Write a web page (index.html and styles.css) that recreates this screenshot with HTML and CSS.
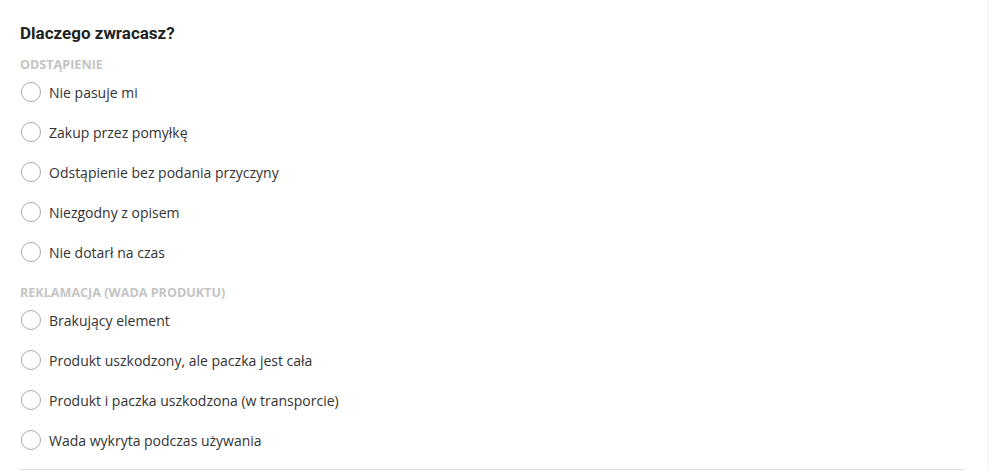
FILE: index.html
```html
<!DOCTYPE html>
<html lang="pl">
<head>
<meta charset="utf-8">
<title>Dlaczego zwracasz?</title>
<link rel="stylesheet" href="styles.css">
</head>
<body>
<div class="page">
  <h2 class="title">Dlaczego zwracasz?</h2>
  <div class="group group-first">
    <div class="label">ODSTĄPIENIE</div>
    <label class="option"><span class="radio"></span><span class="text">Nie pasuje mi</span></label>
    <label class="option"><span class="radio"></span><span class="text">Zakup przez pomyłkę</span></label>
    <label class="option"><span class="radio"></span><span class="text">Odstąpienie bez podania przyczyny</span></label>
    <label class="option"><span class="radio"></span><span class="text">Niezgodny z opisem</span></label>
    <label class="option"><span class="radio"></span><span class="text">Nie dotarł na czas</span></label>
  </div>
  <div class="group group-second">
    <div class="label">REKLAMACJA (WADA PRODUKTU)</div>
    <label class="option"><span class="radio"></span><span class="text">Brakujący element</span></label>
    <label class="option"><span class="radio"></span><span class="text">Produkt uszkodzony, ale paczka jest cała</span></label>
    <label class="option"><span class="radio"></span><span class="text">Produkt i paczka uszkodzona (w transporcie)</span></label>
    <label class="option"><span class="radio"></span><span class="text">Wada wykryta podczas używania</span></label>
  </div>
  <div class="divider"></div>
</div>
</body>
</html>
```
FILE: styles.css
```css
html, body {
  margin: 0;
  padding: 0;
  background: #ffffff;
}
.page {
  width: 989px;
  height: 471px;
  box-sizing: border-box;
  border-right: 1px solid #f2f2f2;
  padding: 21px 24px 0 20px;
  font-family: "Open Sans", "Liberation Sans", sans-serif;
  color: #333333;
}
.title {
  margin: 0;
  font-family: Roboto, "Liberation Sans", sans-serif;
  font-weight: 700;
  font-size: 17px;
  line-height: 24px;
  color: #222222;
}
.group {
  display: flex;
  flex-direction: column;
}
.group-first { margin-top: 13px; }
.group-second { margin-top: 14px; }
.label {
  font-size: 12.6px;
  font-weight: 700;
  line-height: 14px;
  color: #c4c4c4;
}
.option {
  display: flex;
  align-items: center;
  height: 40px;
  gap: 8px;
  padding-left: 1px;
}
.radio {
  width: 18px;
  height: 18px;
  border: 1px solid #a8a8a8;
  border-radius: 50%;
  box-sizing: content-box;
  flex: none;
  background: #fff;
}
.text {
  font-size: 14px;
  color: #333333;
}
.divider {
  margin-top: 9px;
  height: 1px;
  background: #dcdcdc;
}
```
